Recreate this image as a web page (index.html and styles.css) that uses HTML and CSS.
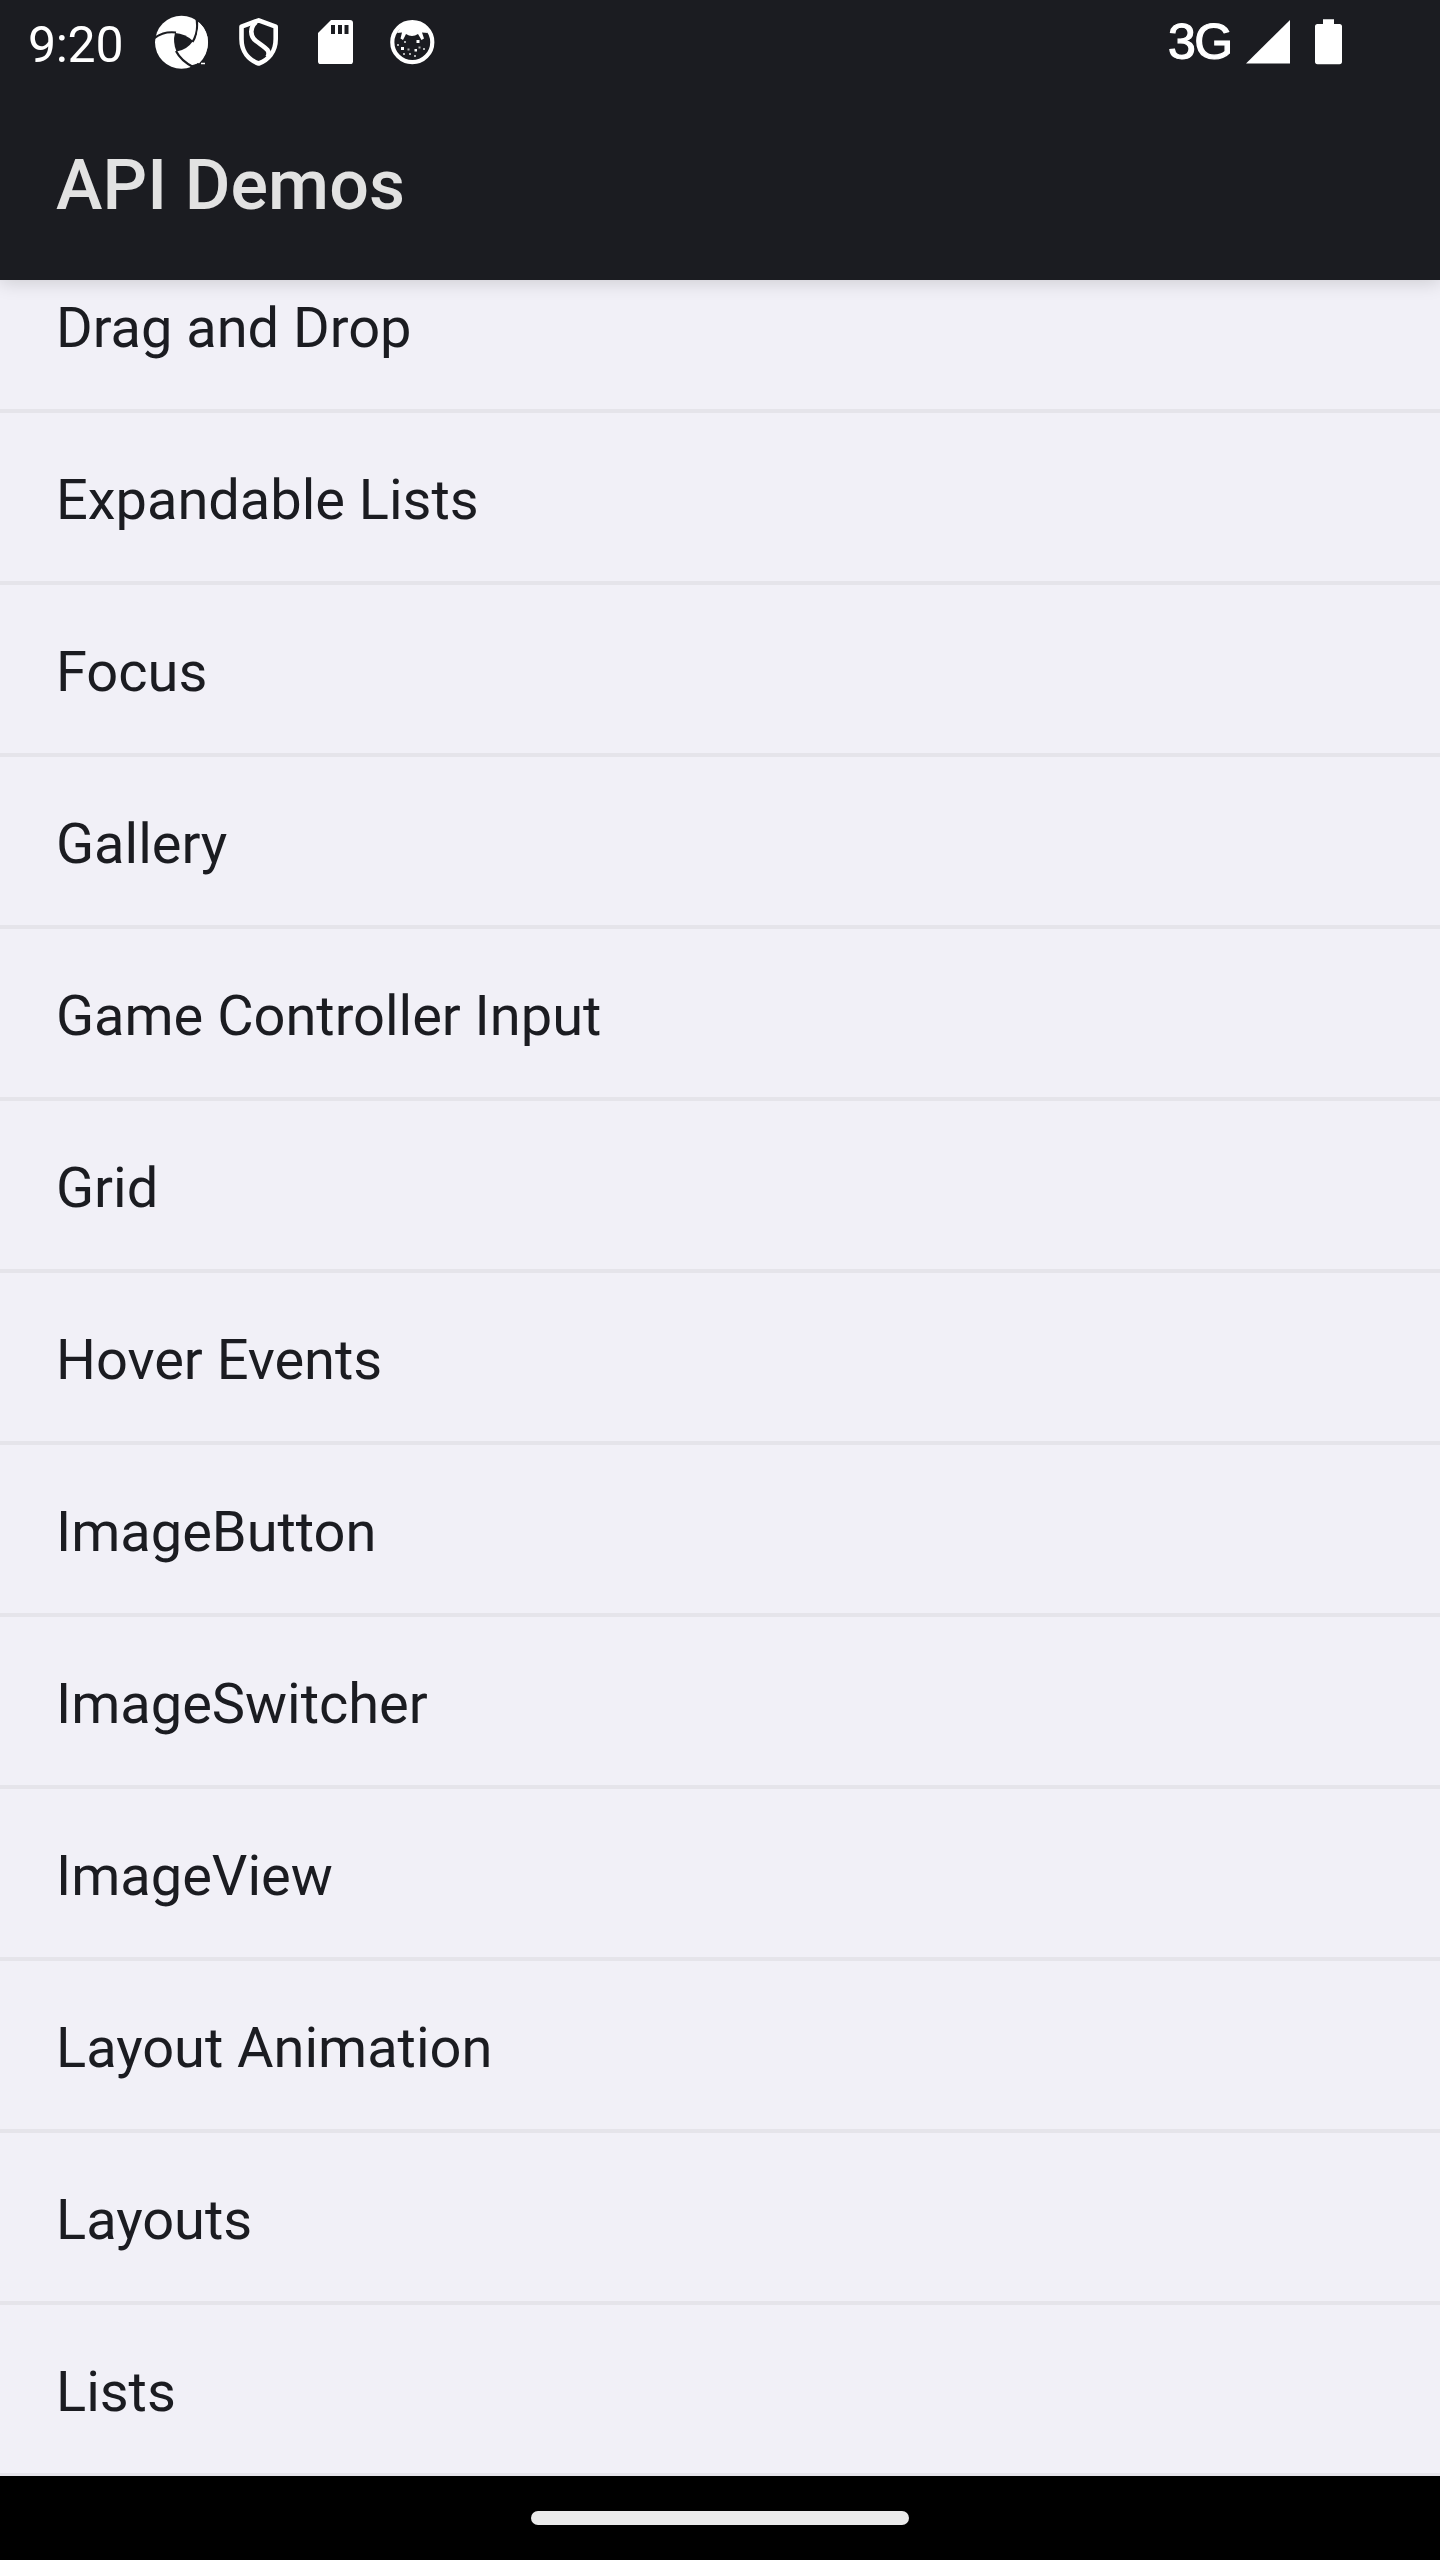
FILE: index.html
```html
<!DOCTYPE html>
<html lang="en">
<head>
<meta charset="utf-8">
<title>API Demos</title>
<link rel="stylesheet" href="styles.css">
</head>
<body>
<div class="screen">
  <header class="header">
    <div class="status">
      <span class="clock">9:20</span>
      <svg class="icon-pinwheel" width="54" height="54" viewBox="155 15 54 54">
        <circle cx="181.500" cy="42.300" r="26.500" fill="#fff"/>
        <path d="M175 33Q185 33.500 193 41Q187 50 176.500 51.500Q172.500 42 175 33Z" fill="#1b1c21"/>
        <path d="M154 38.500Q163 31 176 32.500M195.500 15Q200 30 192.500 42M176 51Q181 61 194 67.500" fill="none" stroke="#1b1c21" stroke-width="2.200"/>
        <path d="M196 15L198.300 21.500L210 32V15ZM190 69L191 65.500L199.500 63L210 57V69Z" fill="#1b1c21"/>
        <path d="M199 22.500Q208 31 208 42.300Q208 55 199 63.500L194 60L196 40Z" fill="#fff"/>
        <path d="M201 63.500h4" stroke="#fff" stroke-width="1.500"/>
      </svg>
      <svg class="icon-shield" width="42" height="50" viewBox="238 17 42 50">
        <path d="M258.700 20.300L275.700 26.700V39C275.700 52 268 60 258.700 63.500C249 60 241.500 52 241.500 39V26.700Z" fill="none" stroke="#fff" stroke-width="4.600" stroke-linejoin="round"/>
        <path d="M256 22C250 27 249.500 36 256 41C264 47 271.500 50 267.500 57" fill="none" stroke="#fff" stroke-width="4.600"/>
      </svg>
      <svg class="icon-sd" width="35" height="44" viewBox="0 0 35 44">
        <path d="M13 0H32Q35 0 35 3V41.500Q35 44.300 32 44.300H3Q0 44.300 0 41.500V13Z" fill="#fff"/>
        <path d="M13 5h4v9h-4zM20 5h4v9h-4zM26.500 5h4v9h-4z" fill="#1b1c21"/>
      </svg>
      <svg class="icon-face" width="46" height="46" viewBox="389 19 46 46">
        <circle cx="412.300" cy="42.200" r="20" fill="none" stroke="#fff" stroke-width="4.200"/>
        <path d="M397 33L403 24Q412 19 422 24L428 33L422 32.500L424 38.500L421.500 40L418 34Q412 38 406 34L403 40L400.500 38.500L402 32.500Z" fill="#fff"/>
        <g fill="#fff"><rect x="401" y="47" width="3" height="3"/><rect x="416.500" y="40" width="3" height="3"/><rect x="414.500" y="49" width="2.500" height="2.500"/><g opacity=".65"><rect x="404" y="41" width="2" height="2"/><rect x="397" y="44" width="2" height="2"/><rect x="407.500" y="48.500" width="2" height="2"/><rect x="403" y="53" width="2" height="2"/><rect x="409" y="53" width="2" height="2"/><rect x="414" y="55" width="2" height="2"/><rect x="418.500" y="46.500" width="2" height="2"/><rect x="423" y="48" width="2" height="2"/></g></g>
      </svg>
      <span class="network">3G</span>
      <svg class="icon-signal" width="44" height="44" viewBox="0 0 44 44"><path d="M0 43.500H44V0Z" fill="#fff"/></svg>
      <svg class="icon-battery" width="27" height="46" viewBox="0 0 27 46"><path d="M8 0.300H19V5H24.500Q27 5 27 7.500V42.500Q27 45.300 24.500 45.300H2.500Q0 45.300 0 42.500V7.500Q0 5 2.500 5H8Z" fill="#fff"/></svg>
    </div>
    <h1 class="title">API Demos</h1>
  </header>
  <ul class="list">
    <li class="row row-clipped">Drag and Drop</li>
    <li class="row">Expandable Lists</li>
    <li class="row">Focus</li>
    <li class="row">Gallery</li>
    <li class="row">Game Controller Input</li>
    <li class="row">Grid</li>
    <li class="row">Hover Events</li>
    <li class="row">ImageButton</li>
    <li class="row">ImageSwitcher</li>
    <li class="row">ImageView</li>
    <li class="row">Layout Animation</li>
    <li class="row">Layouts</li>
    <li class="row">Lists</li>
  </ul>
  <nav class="navbar"><div class="handle"></div></nav>
</div>
</body>
</html>
```
FILE: styles.css
```css
* { box-sizing: border-box; }
body { margin: 0; font-family: Roboto, sans-serif; }
.screen { display: flex; flex-direction: column; width: 1440px; height: 2560px; overflow: hidden; background: #f1f0f7; }
.header { height: 280px; flex: none; background: #1b1c21; box-shadow: 0 2px 18px rgba(0, 0, 0, .16); z-index: 1; }
.status { display: flex; align-items: flex-start; height: 88px; color: #fff; }
.status svg { display: block; flex: none; }
.clock { width: 127px; margin-top: 15px; padding-left: 28px; font-size: 50px; line-height: 60px; letter-spacing: -.3px; white-space: nowrap; }
.icon-pinwheel { margin: 15px 29px 0 28px; }
.icon-shield { margin: 17px 38px 0 0; }
.icon-sd { margin: 20px 36px 0 0; }
.icon-face { margin-top: 19px; }
.network { width: 78px; margin: 12px 0 0 733px; font-family: "Liberation Sans", Arial, sans-serif; font-size: 50px; line-height: 60px; letter-spacing: -1.5px; -webkit-text-stroke: 1.2px #fff; }
.icon-signal { margin-top: 20px; }
.icon-battery { margin: 19px 0 0 25px; }
.title { margin: 0; padding: 56px 56px 0; font-size: 70px; line-height: 82px; letter-spacing: .1px; font-weight: 500; color: #e2e2e2; }
.list { flex: none; height: 2196px; margin: 0; padding: 0; list-style: none; overflow: hidden; }
.row { height: 172px; padding: 55px 56px 0; border-bottom: 4px solid #e5e4ea; font-size: 56px; line-height: 64px; letter-spacing: -.03px; color: #1b1c21; white-space: nowrap; }
.row-clipped { height: 133px; padding-top: 16px; }
.navbar { flex: 1; display: flex; justify-content: center; padding-top: 35px; background: #000; }
.handle { width: 378px; height: 14px; border-radius: 7px; background: #ebebeb; }
```
